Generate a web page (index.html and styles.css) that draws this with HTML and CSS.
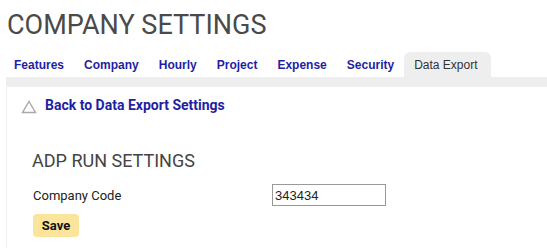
FILE: index.html
```html
<!DOCTYPE html>
<html lang="en">
<head>
  <meta charset="UTF-8">
  <title>Company Settings - Data Export</title>
  <link rel="stylesheet" href="styles.css">
</head>
<body>
  <h1 class="page-title">COMPANY SETTINGS</h1>

  <ul class="tabs">
    <li><a href="#">Features</a></li>
    <li><a href="#">Company</a></li>
    <li><a href="#">Hourly</a></li>
    <li><a href="#">Project</a></li>
    <li><a href="#">Expense</a></li>
    <li><a href="#">Security</a></li>
    <li class="active"><a href="#">Data Export</a></li>
  </ul>
  <div class="tab-bar"></div>

  <div class="panel">
    <a class="back-link" href="#">
      <svg width="16" height="14" viewBox="0 0 16 14">
        <polygon points="8,1.5 14.5,12.5 1.5,12.5" fill="none" stroke="#a8a8a8" stroke-width="1.4"/>
      </svg>
      <span>Back to Data Export Settings</span>
    </a>

    <div class="settings">
      <h2>ADP RUN SETTINGS</h2>
      <div class="field">
        <label for="company-code">Company Code</label>
        <input type="text" id="company-code" value="343434">
      </div>
      <button class="save-btn">Save</button>
    </div>
  </div>
</body>
</html>
```

FILE: styles.css
```css
body {
  margin: 0;
  background: #fff;
  font-family: Roboto, 'Liberation Sans', sans-serif;
}

.page-title {
  margin: 9px 0 0 7px;
  font-size: 27px;
  line-height: 32px;
  font-weight: 400;
  color: #4a4a4a;
}

.tabs {
  list-style: none;
  display: flex;
  margin: 11px 0 0 4px;
  padding: 0;
}

.tabs li a {
  display: block;
  padding: 1px 10px 0;
  line-height: 24px;
  font-family: 'Liberation Sans', Arial, sans-serif;
  font-size: 12px;
  font-weight: bold;
  color: #1f1fa3;
  text-decoration: none;
}

.tabs li.active a {
  padding-right: 13px;
  background: #eeeeee;
  border-radius: 6px 6px 0 0;
  font-weight: normal;
  color: #333;
}

.tab-bar {
  margin-left: 6px;
  height: 10px;
  background: #eeeeee;
}

.panel {
  margin-left: 6px;
  border-left: 1px solid #efefef;
  padding: 9px 0 12px 14px;
}

.back-link {
  display: flex;
  align-items: center;
  gap: 8px;
  line-height: 18px;
  font-size: 14px;
  font-weight: bold;
  color: #1f1fa3;
  text-decoration: none;
}

.back-link svg {
  margin-top: 3px;
}

.settings {
  padding-left: 11px;
}

.settings h2 {
  margin: 36px 0 0;
  font-size: 18px;
  line-height: 22px;
  font-weight: 400;
  color: #444;
}

.field {
  display: flex;
  align-items: center;
  margin-top: 12px;
}

.field label {
  width: 239px;
  padding-left: 1px;
  font-size: 13px;
  color: #222;
}

.field input {
  box-sizing: border-box;
  width: 114px;
  height: 22px;
  margin: 0;
  padding: 0 2px;
  border: 1px solid #999;
  font-family: 'Liberation Sans', Arial, sans-serif;
  font-size: 13px;
  color: #222;
}

.save-btn {
  margin: 8px 0 0 1px;
  width: 46px;
  height: 23px;
  padding: 0;
  border: none;
  border-radius: 4px;
  background: #fbe49c;
  font-family: Roboto, sans-serif;
  font-size: 13px;
  font-weight: bold;
  color: #111;
  cursor: pointer;
}
```
